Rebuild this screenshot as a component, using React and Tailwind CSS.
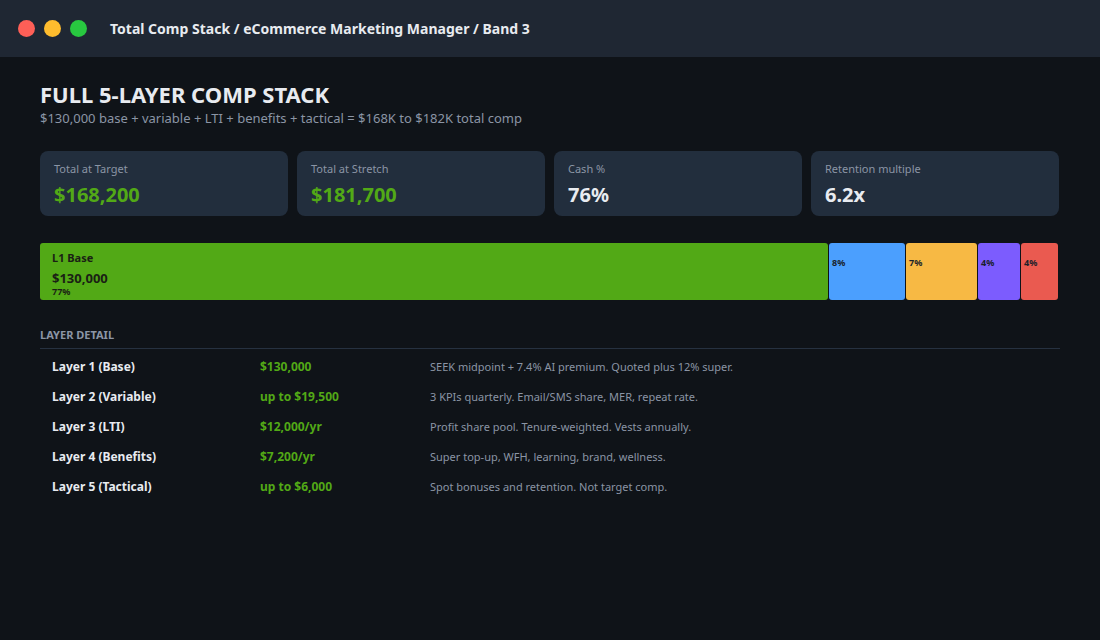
const STATS = [
  ['Total at Target', '$168,200', 'text-[#52a916]'],
  ['Total at Stretch', '$181,700', 'text-[#52a916]'],
  ['Cash %', '76%', 'text-[#e8ebf0]'],
  ['Retention multiple', '6.2x', 'text-[#e8ebf0]'],
]

const LAYERS = [
  ['Layer 1 (Base)', '$130,000', 'SEEK midpoint + 7.4% AI premium. Quoted plus 12% super.'],
  ['Layer 2 (Variable)', 'up to $19,500', '3 KPIs quarterly. Email/SMS share, MER, repeat rate.'],
  ['Layer 3 (LTI)', '$12,000/yr', 'Profit share pool. Tenure-weighted. Vests annually.'],
  ['Layer 4 (Benefits)', '$7,200/yr', 'Super top-up, WFH, learning, brand, wellness.'],
  ['Layer 5 (Tactical)', 'up to $6,000', 'Spot bonuses and retention. Not target comp.'],
]

export default function App() {
  return (
    <div className="w-[1100px] h-[640px] bg-[#0f1318] font-['Liberation_Sans',Arial,sans-serif] overflow-hidden">
      <div className="h-[57px] bg-[#1f2733] flex items-center px-[18px]">
        <div className="flex gap-[9px]">
          <span className="w-[17px] h-[17px] rounded-full bg-[#fe5f57]" />
          <span className="w-[17px] h-[17px] rounded-full bg-[#febc2e]" />
          <span className="w-[17px] h-[17px] rounded-full bg-[#28c840]" />
        </div>
        <div className="ml-[23px] text-[14px] font-bold text-[#e8ebf0]">Total Comp Stack / eCommerce Marketing Manager / Band 3</div>
      </div>

      <div className="px-[40px] pt-[23px]">
        <h1 className="text-[22px] font-bold text-[#e8ebf0] leading-[28px]">FULL 5-LAYER COMP STACK</h1>
        <p className="text-[13px] text-[#8b95a5] mt-[1px]">$130,000 base + variable + LTI + benefits + tactical = $168K to $182K total comp</p>

        <div className="grid grid-cols-4 gap-[9px] mt-[22px] w-[1019px]">
          {STATS.map(([l, v, c]) => (
            <div key={l} className="bg-[#222e3d] rounded-[8px] h-[65px] px-[14px] pt-[10px]">
              <div className="text-[11px] text-[#8b95a5]">{l}</div>
              <div className={`text-[20px] font-bold mt-[3px] ${c}`}>{v}</div>
            </div>
          ))}
        </div>

        <div className="flex gap-[1px] mt-[27px] h-[57px] w-[1018px]">
          <div className="w-[788px] bg-[#52a916] rounded-[3px] px-[12px] pt-[8px] text-[#1a1f14]">
            <div className="text-[11px] font-bold leading-[13px]">L1 Base</div>
            <div className="text-[13px] font-bold font-['Liberation_Serif',serif] mt-[7px] leading-[15px]">$130,000</div>
            <div className="text-[9px] font-bold leading-[11px]">77%</div>
          </div>
          <div className="w-[76px] bg-[#4b9ffe] rounded-[3px] px-[3px] pt-[13px] text-[9px] font-bold text-[#1a1f2a]">8%</div>
          <div className="w-[71px] bg-[#f7b944] rounded-[3px] px-[3px] pt-[13px] text-[9px] font-bold text-[#1a1f2a]">7%</div>
          <div className="w-[42px] bg-[#7c5cfe] rounded-[3px] px-[3px] pt-[13px] text-[9px] font-bold text-[#1a1f2a]">4%</div>
          <div className="flex-1 bg-[#ea5a50] rounded-[3px] px-[3px] pt-[13px] text-[9px] font-bold text-[#1a1f2a]">4%</div>
        </div>

        <div className="mt-[27px] w-[1020px]">
          <div className="text-[11px] font-bold text-[#8b95a5] pb-[5px] border-b border-[#263140]">LAYER DETAIL</div>
          <div className="pt-[3px]">
            {LAYERS.map(([n, a, d]) => (
              <div key={n} className="flex items-center h-[30px] px-[12px]">
                <div className="w-[208px] text-[12px] font-bold text-[#e8ebf0]">{n}</div>
                <div className="w-[170px] text-[12px] font-bold text-[#52a916]">{a}</div>
                <div className="text-[11px] text-[#8b95a5]">{d}</div>
              </div>
            ))}
          </div>
        </div>
      </div>
    </div>
  )
}
